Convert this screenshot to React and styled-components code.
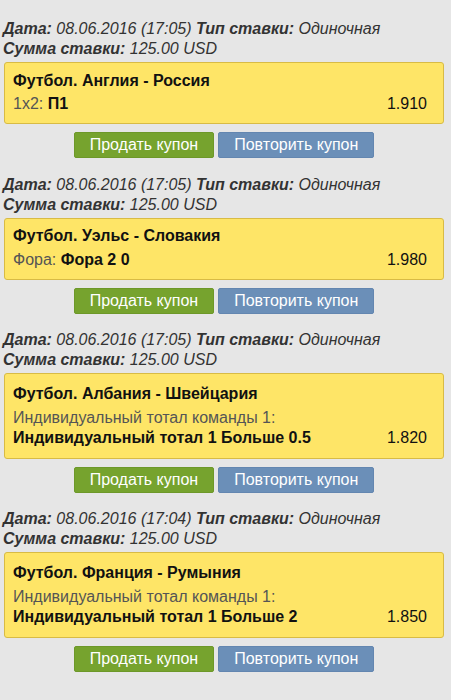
import React from 'react';
import styled, { createGlobalStyle } from 'styled-components';

const GlobalStyle = createGlobalStyle`
  html, body {
    margin: 0;
    padding: 0;
    background: #e6e6e6;
  }
  body {
    font-family: Arial, "Liberation Sans", sans-serif;
    font-size: 16px;
    color: #222;
  }
`;

const Page = styled.div`
  padding: 19px 7px 0 4px;
`;

const Bet = styled.div`
  margin-bottom: 16.5px;
`;

const Info = styled.div`
  font-style: italic;
  line-height: 20px;
  color: #333;
  margin-left: -1px;

  b {
    font-weight: bold;
  }
`;

const Coupon = styled.div`
  margin-top: 3px;
  background: #fee567;
  border: 1px solid #d8bb45;
  border-radius: 3px;
  padding: ${(p) => (p.$tall ? '9.5px 16px 10px 8px' : '7.5px 16px 9px 8px')};
  line-height: 20px;
`;

const Title = styled.div`
  font-weight: bold;
  color: #111;
  margin-bottom: ${(p) => (p.$tall ? '4px' : '3.5px')};
`;

const Row = styled.div`
  display: flex;
  justify-content: space-between;
  color: #111;
`;

const Label = styled.span`
  color: #555;
`;

const Value = styled.span`
  font-weight: bold;
  color: #111;
`;

const Subtitle = styled.div`
  color: #555;
`;

const Buttons = styled.div`
  display: flex;
  justify-content: center;
  gap: 4px;
  margin-top: 8px;
`;

const Button = styled.button`
  font-family: Arial, "Liberation Sans", sans-serif;
  font-size: 16px;
  height: 26px;
  padding: 0 15px;
  border: 1px solid ${(p) => (p.$variant === 'sell' ? '#6d9829' : '#6386b0')};
  border-radius: 2px;
  color: #fff;
  background: ${(p) => (p.$variant === 'sell' ? '#76a32e' : '#6b8fb8')};
  cursor: pointer;
`;

const bets = [
  {
    date: '08.06.2016 (17:05)',
    match: 'Футбол. Англия - Россия',
    label: '1x2:',
    value: 'П1',
    odds: '1.910',
  },
  {
    date: '08.06.2016 (17:05)',
    match: 'Футбол. Уэльс - Словакия',
    label: 'Фора:',
    value: 'Фора 2 0',
    odds: '1.980',
  },
  {
    date: '08.06.2016 (17:05)',
    match: 'Футбол. Албания - Швейцария',
    subtitle: 'Индивидуальный тотал команды 1:',
    value: 'Индивидуальный тотал 1 Больше 0.5',
    odds: '1.820',
  },
  {
    date: '08.06.2016 (17:04)',
    match: 'Футбол. Франция - Румыния',
    subtitle: 'Индивидуальный тотал команды 1:',
    value: 'Индивидуальный тотал 1 Больше 2',
    odds: '1.850',
  },
];

const App = () => (
  <Page>
    <GlobalStyle />
    {bets.map((bet, i) => (
      <Bet key={i}>
        <Info>
          <b>Дата:</b> {bet.date} <b>Тип ставки:</b> Одиночная
          <br />
          <b>Сумма ставки:</b> 125.00 USD
        </Info>
        <Coupon $tall={!!bet.subtitle}>
          <Title $tall={!!bet.subtitle}>{bet.match}</Title>
          {bet.subtitle && <Subtitle>{bet.subtitle}</Subtitle>}
          <Row>
            <span>
              {bet.label && <Label>{bet.label} </Label>}
              <Value>{bet.value}</Value>
            </span>
            <span>{bet.odds}</span>
          </Row>
        </Coupon>
        <Buttons>
          <Button $variant="sell">Продать купон</Button>
          <Button $variant="repeat">Повторить купон</Button>
        </Buttons>
      </Bet>
    ))}
  </Page>
);

export default App;
